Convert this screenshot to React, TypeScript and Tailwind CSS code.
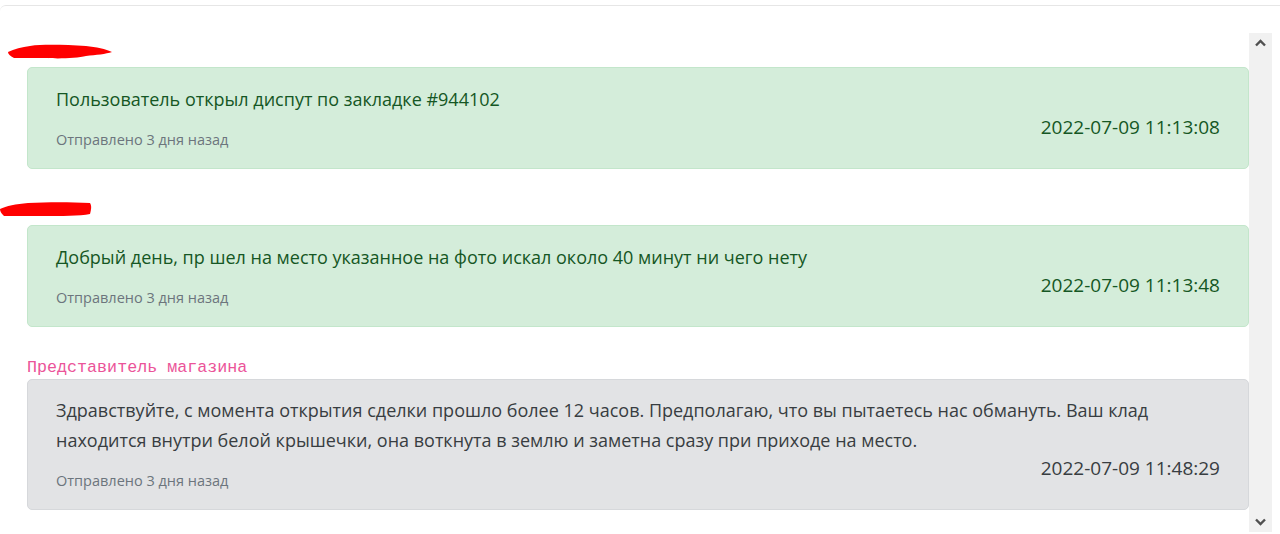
import React from "react"

interface Message {
  author: "user" | "shop"
  text: string
  sent: string
  time: string
}

const messages: Message[] = [
  {
    author: "user",
    text: "Пользователь открыл диспут по закладке #944102",
    sent: "Отправлено 3 дня назад",
    time: "2022-07-09 11:13:08",
  },
  {
    author: "user",
    text: "Добрый день, пр шел на место указанное на фото искал около 40 минут ни чего нету",
    sent: "Отправлено 3 дня назад",
    time: "2022-07-09 11:13:48",
  },
  {
    author: "shop",
    text: "Здравствуйте, с момента открытия сделки прошло более 12 часов. Предполагаю, что вы пытаетесь нас обмануть. Ваш клад находится внутри белой крышечки, она воткнута в землю и заметна сразу при приходе на место.",
    sent: "Отправлено 3 дня назад",
    time: "2022-07-09 11:48:29",
  },
]

function Redacted({ wide }: { wide?: boolean }) {
  // hidden user name, scribbled over in red
  return wide ? (
    <svg width="104" height="20" viewBox="0 0 104 20" className="ml-[8px] -mt-[8px]">
      <path
        d="M0 11 C6 8 14 6 22 5 C36 3 58 4 78 5 C88 6 98 8 104 11 C98 13 88 14 78 15 C70 17 50 18 40 17 C30 17 18 17 6 17 C2 15 0 13 0 11 Z"
        fill="#ff0000"
      />
    </svg>
  ) : (
    <svg width="92" height="20" viewBox="0 0 92 20" className="-mt-[8px]">
      <path
        d="M0 10 C6 7 16 5 28 4 C48 3 70 3 90 4 C92 7 91 11 90 15 C80 17 60 17 46 17 C30 17 16 17 4 17 C1 14 0 12 0 10 Z"
        fill="#ff0000"
      />
    </svg>
  )
}

function MessageBox({ m }: { m: Message }) {
  const green = m.author === "user"
  return (
    <div
      className={
        green
          ? "rounded-[5px] border border-[#c3e6cb] bg-[#d4edda] px-[28px] pt-[16px] pb-[18px] text-[#155724]"
          : "rounded-[5px] border border-[#d6d8db] bg-[#e2e3e5] px-[28px] pt-[15px] pb-[18px] text-[#383d41]"
      }
    >
      <p className="text-[18px] leading-[30px]">{m.text}</p>
      <div className="flex items-start justify-between">
        <span className="pt-[16px] text-[14.5px] leading-[20px] text-[#6c757d]">{m.sent}</span>
        <span className="-mt-[2px] text-[19px] leading-[30px]">{m.time}</span>
      </div>
    </div>
  )
}

export default function App() {
  return (
    <div className="h-[534px] w-[1280px] overflow-hidden bg-white pt-[5px] font-['Open_Sans',sans-serif]">
      <div className="h-[540px] rounded-tl-[6px] border-t border-[#e6e6e6] pt-[27px]">
        <div className="flex h-[499px] pr-[8px]">
          <div className="flex-1 pl-[27px] pt-[10px]">
            <div className="-ml-[27px] flex h-[24px] items-center">
              <Redacted wide />
            </div>
            <MessageBox m={messages[0]} />

            <div className="-ml-[27px] mt-[32px] flex h-[24px] items-center">
              <Redacted />
            </div>
            <MessageBox m={messages[1]} />

            <div className="mt-[28px] h-[24px] pt-[2px] font-['Liberation_Mono',monospace] text-[16.7px] leading-[22px] text-[#eb5499]">
              Представитель магазина
            </div>
            <MessageBox m={messages[2]} />
          </div>

          <div className="flex w-[23px] flex-col items-center justify-between bg-[#f1f1f1] py-[6px]">
            <svg width="11" height="8" viewBox="0 0 11 8">
              <path d="M1 6.5 L5.5 2 L10 6.5" fill="none" stroke="#505050" strokeWidth="2.4" />
            </svg>
            <svg width="11" height="8" viewBox="0 0 11 8">
              <path d="M1 1.5 L5.5 6 L10 1.5" fill="none" stroke="#505050" strokeWidth="2.4" />
            </svg>
          </div>
        </div>
      </div>
    </div>
  )
}
